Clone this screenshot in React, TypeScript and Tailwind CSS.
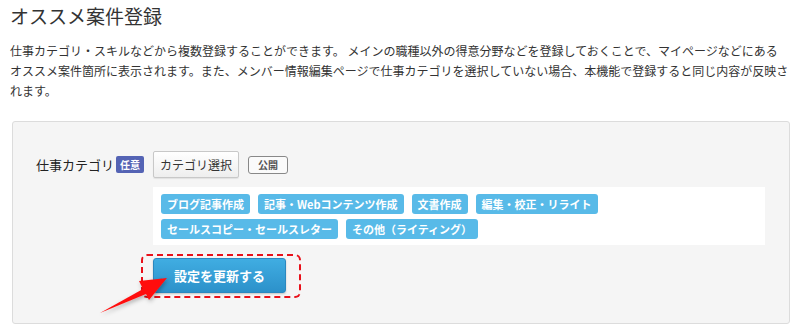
import React from 'react';

const TAGS = [
  'ブログ記事作成',
  '記事・Webコンテンツ作成',
  '文書作成',
  '編集・校正・リライト',
  'セールスコピー・セールスレター',
  'その他（ライティング）',
];

export default function App() {
  return (
    <div className="relative w-[802px] h-[335px] overflow-hidden bg-white text-[#333] font-['Noto_Sans_CJK_JP','Noto_Sans',sans-serif]">
      {/* Heading */}
      <h1 className="mt-[3px] pl-[10px] text-[19px] leading-[26px] font-normal text-[#333]">オススメ案件登録</h1>

      {/* Description */}
      <p className="mt-[12px] pl-[10px] w-[795px] text-[12px] leading-[20px] text-[#333]">
        仕事カテゴリ・スキルなどから複数登録することができます。 メインの職種以外の得意分野などを登録しておくことで、マイページなどにある
        <br />
        オススメ案件箇所に表示されます。また、メンバー情報編集ページで仕事カテゴリを選択していない場合、本機能で登録すると同じ内容が反映さ
        <br />
        れます。
      </p>

      {/* Panel */}
      <div className="mt-[20px] ml-[12px] w-[778px] h-[203px] rounded-[3px] border border-[#dcdcdc] bg-[#f5f5f5] pt-[29px] pl-[23px]">
        <div className="flex">
          <div className="w-[117px] h-[27px] flex items-center">
            <span className="text-[13px] text-[#222]">仕事カテゴリ</span>
            <span className="ml-[2px] h-[17px] w-[28px] rounded-[2px] bg-[#5463b4] text-white text-[10px] font-bold flex items-center justify-center">
              任意
            </span>
          </div>

          <div className="flex flex-col">
            <div className="flex items-center">
              <button className="h-[27px] px-[6px] rounded-[2px] border border-[#c8c8c8] bg-gradient-to-b from-white to-[#eeeeee] text-[12px] text-[#333] shadow-[0_1px_1px_rgba(0,0,0,0.08)]">
                カテゴリ選択
              </button>
              <span className="ml-[9px] h-[18px] w-[40px] rounded-[3px] border border-[#888] bg-[#fafafa] text-[10px] font-bold text-[#555] flex items-center justify-center">
                公開
              </span>
            </div>

            <div className="mt-[9px] w-[612px] h-[58px] bg-white px-[8px] pt-[7px] flex flex-wrap content-start gap-x-[8px] gap-y-[5px]">
              {TAGS.map(t => (
                <span
                  key={t}
                  className="h-[20px] px-[6px] rounded-[3px] bg-[#58bae8] text-white text-[11px] font-bold leading-[20px] whitespace-nowrap"
                >
                  {t}
                </span>
              ))}
            </div>

            <div className="relative mt-[13px] w-[133px]">
              <button className="w-[133px] h-[35px] rounded-[3px] border border-[#2b88bf] bg-gradient-to-b from-[#40ade2] to-[#2c91ca] text-white text-[13px] font-bold shadow-[0_1px_2px_rgba(0,0,0,0.2)]">
                設定を更新する
              </button>
              <div className="absolute -left-[12px] -top-[4px] -right-[15px] -bottom-[5px] rounded-[6px] border-2 border-dashed border-[#e8101a] pointer-events-none" />
            </div>
          </div>
        </div>
      </div>

      {/* Annotation arrow */}
      <svg
        className="absolute left-0 top-0 pointer-events-none"
        width="802"
        height="335"
        viewBox="0 0 802 335"
      >
        <defs>
          <filter id="arrowShadow" x="-20%" y="-20%" width="140%" height="140%">
            <feDropShadow dx="1" dy="2" stdDeviation="2" floodColor="#000" floodOpacity="0.3" />
          </filter>
        </defs>
        <polygon
          points="100,313 143,289 139,281 167,278 149,300 146,294"
          fill="#ff1010"
          filter="url(#arrowShadow)"
        />
      </svg>
    </div>
  );
}
